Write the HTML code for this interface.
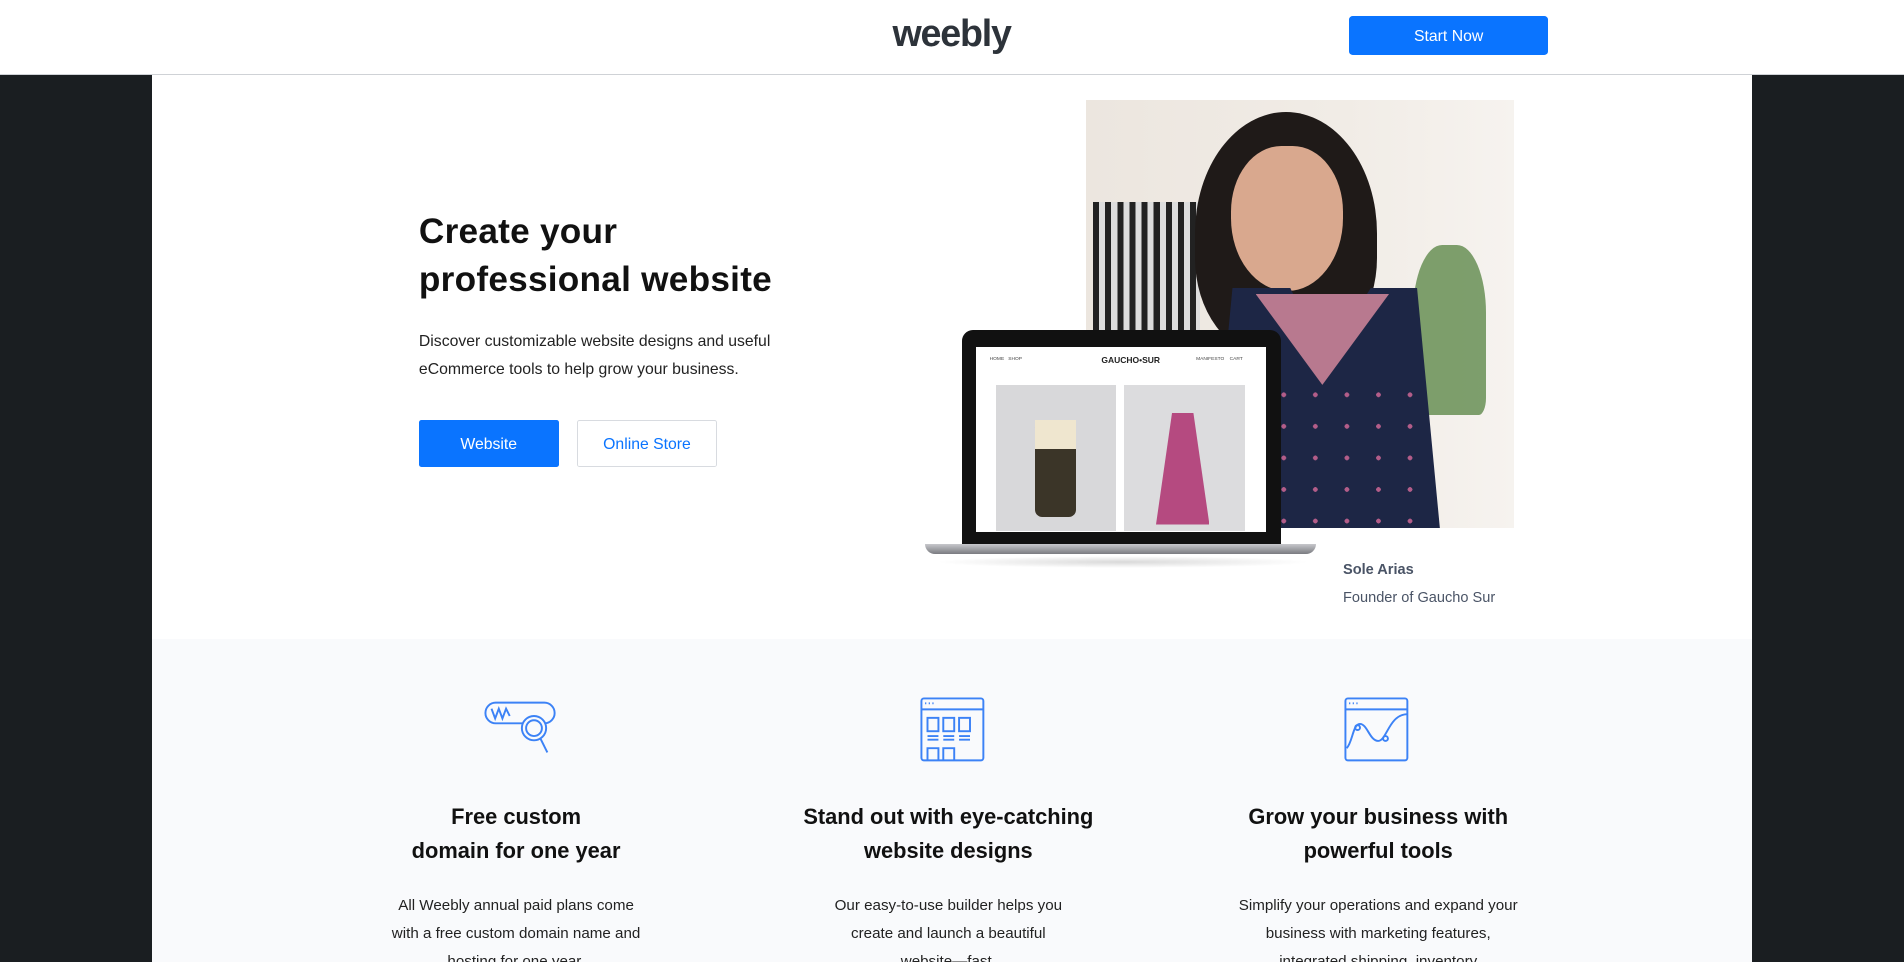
<!DOCTYPE html>
<html><head><meta charset="utf-8"><style>
html,body{margin:0;padding:0;overflow:hidden;width:1904px;height:962px;background:#1a1e21}
#w{zoom:1.2142857;width:1568px;height:792px;position:relative;font-family:"Liberation Sans",sans-serif;overflow:hidden;background:#1a1e21}
.a{position:absolute}
.hdr{left:0;top:0;width:1568px;height:61px;background:#fff;border-bottom:1px solid #cfd2d6}
.logo{left:735px;top:10px;font-size:31px;font-weight:bold;color:#2d333a;letter-spacing:-1px}
.btn{background:#0a74ff;color:#fff;border-radius:3px;text-align:center;font-size:13px}
.main{left:125px;top:62px;width:1318px;height:464px;background:#fff}
.feat{left:125px;top:526px;width:1318px;height:270px;background:#f9fafc}
h1{margin:0;position:absolute;left:345px;top:171px;font-size:29px;font-weight:bold;line-height:40px;color:#111;letter-spacing:0.2px}
.p{left:345px;top:270px;font-size:13px;line-height:23px;color:#222}
.ft{width:340px;text-align:center;color:#111}
.ft b{display:block;font-size:18px;font-weight:bold;line-height:28px}
.ft p{margin:20px auto 0;font-size:12.5px;line-height:23px;width:228px;color:#222}
</style></head><body><div id="w">
<div class="a hdr"></div>
<div class="a logo">weebly</div>
<div class="a btn" style="left:1111px;top:13px;width:164px;height:32px;line-height:34px">Start Now</div>
<div class="a main"></div>
<h1>Create your<br>professional website</h1>
<div class="a p">Discover customizable website designs and useful<br>eCommerce tools to help grow your business.</div>
<div class="a btn" style="left:345px;top:346px;width:115px;height:39px;line-height:41px;border-radius:2px">Website</div>
<div class="a" style="left:475px;top:346px;width:114px;height:37px;line-height:39px;border:1px solid #d8dbe0;border-radius:2px;color:#0a74ff;text-align:center;font-size:13px">Online Store</div>

<div class="a" style="left:894px;top:82px;width:353px;height:353px;background:linear-gradient(90deg,#ece6df 0%,#f1ece6 60%,#f6f3ef 100%);overflow:hidden">
 <div class="a" style="left:6px;top:84px;width:88px;height:110px;background:repeating-linear-gradient(90deg,#222 0 5px,#ddd 5px 10px)"></div>
 <div class="a" style="left:270px;top:120px;width:60px;height:140px;background:#5f8a4b;border-radius:40% 40% 10% 10%;opacity:.8"></div>
 <div class="a" style="left:90px;top:10px;width:150px;height:200px;background:#1f1a18;border-radius:50% 50% 40% 40%"></div>
 <div class="a" style="left:120px;top:38px;width:92px;height:120px;background:#d9a88e;border-radius:45% 45% 50% 50%"></div>
 <div class="a" style="left:102px;top:155px;width:190px;height:200px;background:#1d2645;clip-path:polygon(10% 0,35% 0,50% 30%,70% 0,90% 0,100% 100%,0 100%)"></div>
 <div class="a" style="left:140px;top:160px;width:110px;height:75px;background:#b8798f;clip-path:polygon(0 0,100% 0,50% 100%)"></div>
 <div class="a" style="left:150px;top:230px;width:130px;height:120px;background:radial-gradient(circle,#d96b9a 0 10%,transparent 11%) 0 0/26px 26px;opacity:.8"></div>
</div>
<div class="a" style="left:792px;top:272px;width:263px;height:178px;background:#111;border-radius:9px 9px 0 0"></div>
<div class="a" style="left:804px;top:286px;width:239px;height:152px;background:#fff"></div>
<div class="a" style="left:907px;top:292px;font-size:7px;font-weight:bold;color:#222">GAUCHO•SUR</div>
<div class="a" style="left:815px;top:294px;font-size:4px;color:#444">HOME &nbsp; SHOP</div>
<div class="a" style="left:985px;top:294px;font-size:4px;color:#444">MANIFESTO &nbsp;&nbsp; CART</div>
<div class="a" style="left:820px;top:317px;width:99px;height:120px;background:#d8d8da"></div>
<div class="a" style="left:852px;top:346px;width:34px;height:80px;background:#3b3528;border-radius:6px"></div>
<div class="a" style="left:852px;top:346px;width:34px;height:24px;background:#efe6cf"></div>
<div class="a" style="left:926px;top:317px;width:99px;height:120px;background:#dcdcde"></div>
<div class="a" style="left:952px;top:340px;width:44px;height:92px;background:#b54a80;clip-path:polygon(30% 0,70% 0,100% 100%,0 100%)"></div>
<div class="a" style="left:762px;top:448px;width:322px;height:8px;background:linear-gradient(#c7c8cc,#7a7b80);border-radius:0 0 10px 10px"></div>
<div class="a" style="left:770px;top:458px;width:310px;height:10px;background:radial-gradient(ellipse,rgba(0,0,0,.15),transparent 70%)"></div>
<div class="a" style="left:1106px;top:463px;font-size:12px;font-weight:bold;color:#4a5466">Sole Arias</div>
<div class="a" style="left:1106px;top:486px;font-size:12px;color:#4a5466">Founder of Gaucho Sur</div>

<div class="a feat"></div>
<svg class="a" style="left:398px;top:576px" width="62" height="48" fill="none" stroke="#3c82f6" stroke-width="1.6">
 <rect x="2" y="3" width="57" height="17" rx="8.5"/><path d="M7 8l3 8 3-8 3 8 3-8 3 6" /><circle cx="42" cy="24" r="10" fill="#f9fafc"/><circle cx="42" cy="24" r="6.5"/><path d="M47 32l6 12"/>
</svg>
<svg class="a" style="left:757px;top:573px" width="56" height="56" fill="none" stroke="#3c82f6" stroke-width="1.6">
 <rect x="2" y="2" width="51" height="51" rx="2"/><path d="M2 11h51"/><path d="M5 6h1M8 6h1M11 6h1"/><rect x="7" y="18" width="9" height="11"/><rect x="20" y="18" width="9" height="11"/><rect x="33" y="18" width="9" height="11"/><path d="M7 33h9M20 33h9M33 33h9M7 36h9M20 36h9M33 36h9"/><path d="M7 53V43h9v10M20 53V43h9v10"/>
</svg>
<svg class="a" style="left:1106px;top:573px" width="56" height="56" fill="none" stroke="#3c82f6" stroke-width="1.6">
 <rect x="2" y="2" width="51" height="51" rx="2"/><path d="M2 11h51"/><path d="M5 6h1M8 6h1M11 6h1"/><path d="M3 43c5-5 5-20 11-20s8 14 15 14 9-22 24-22"/><circle cx="12" cy="26" r="2"/><circle cx="35" cy="35" r="2"/>
</svg>
<div class="a ft" style="left:255px;top:659px"><b>Free custom<br>domain for one year</b><p>All Weebly annual paid plans come<br>with a free custom domain name and<br>hosting for one year.</p></div>
<div class="a ft" style="left:611px;top:659px"><b>Stand out with eye-catching<br>website designs</b><p style="width:215px">Our easy-to-use builder helps you<br>create and launch a beautiful<br>website—fast.</p></div>
<div class="a ft" style="left:965px;top:659px"><b>Grow your business with<br>powerful tools</b><p style="width:270px">Simplify your operations and expand your<br>business with marketing features,<br>integrated shipping, inventory</p></div>
</div></body></html>
